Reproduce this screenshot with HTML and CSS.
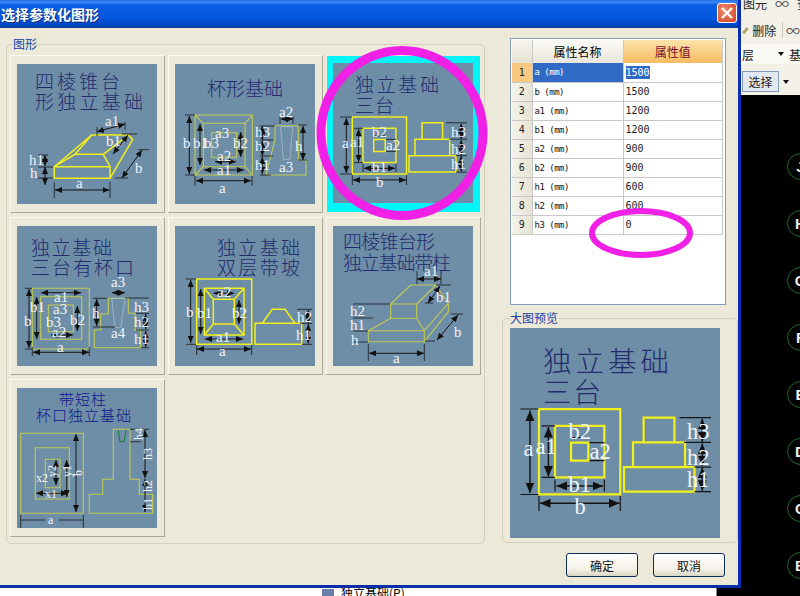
FILE: index.html
```html
<!DOCTYPE html>
<html lang="zh-CN">
<head>
    <meta charset="UTF-8">
    <title>选择参数化图形</title>
    <link rel="stylesheet" href="styles.css">
</head>
<body>
<div class="desktop">
    <svg class="svg-defs" width="0" height="0">
        <defs>
            <marker id="arr" viewBox="0 0 7 6" refX="7" refY="3" markerWidth="7" markerHeight="6" markerUnits="userSpaceOnUse" orient="auto-start-reverse">
                <path d="M0 0L7 3L0 6Z" fill="#111"/>
            </marker>
        </defs>
    </svg>

    <!-- application behind the dialog -->
    <div class="app-toolbar">
        <div class="tool-row tool-row-top"><span>图元</span><span class="tool-glass">∞</span><span>查</span></div>
        <div class="tool-row tool-row-del"><span class="pencil"></span><span>删除</span><span class="tool-sep"></span><span class="tool-glass">∞</span></div>
        <div class="tool-row tool-row-layer"><span>层</span><span class="drop"></span><span>基</span></div>
        <div class="tool-row tool-row-sel"><span class="sel-btn">选择</span><span class="drop"></span></div>
    </div>
    <div class="axis-list">
        <div class="axis">J</div>
        <div class="axis">H</div>
        <div class="axis">G</div>
        <div class="axis">F</div>
        <div class="axis">E</div>
        <div class="axis">D</div>
        <div class="axis">C</div>
        <div class="axis">B</div>
    </div>
    <div class="tree-strip"><span class="tree-icon"></span>独立基础(P)</div>

    <div class="window">
        <div class="titlebar">
            <span class="title-text">选择参数化图形</span>
            <span class="close-btn">
                <svg width="14" height="14" viewBox="0 0 14 14"><path d="M2 2L12 12M12 2L2 12" stroke="#fff" stroke-width="2.4"/></svg>
            </span>
        </div>

        <div class="dialog-main">
            <fieldset class="group group-shapes">
                <legend>图形</legend>
                <div class="shape-grid">

                    <div class="shape-card">
                        <svg class="drawing" viewBox="0 0 140 140">
                            <text class="ttl" x="18" y="25" textLength="85">四棱锥台</text>
                            <text class="ttl" x="18" y="45" textLength="108">形独立基础</text>
                            <g class="yl">
                                <path d="M37.3 102.7L74.7 71H111.3L115.7 75.3L93 114.3H37.3ZM37.3 102.7H93V114.3M93 102.7L86.3 90.3H58L37.3 102.7M58 90.3L74.7 71M86.3 90.3L111.3 71L115.7 75.3"/>
                            </g>
                            <g class="tick">
                                <path d="M37.3 118V134M93 118V134M21 91H31M21 103H36M21 114H36M80 63V72M108 58V66M105 70H120M121 85.7H132M98 114H111"/>
                            </g>
                            <g class="dim" marker-start="url(#arr)" marker-end="url(#arr)">
                                <path d="M38 126H92.5"/>
                                <path d="M28 91V102"/>
                                <path d="M28 103V121"/>
                                <path d="M80 67.7L108 60"/>
                                <path d="M111 71L96 90"/>
                                <path d="M125 86L105 114"/>
                            </g>
                            <text class="lb" x="88" y="62">a1</text>
                            <text class="lb" x="89" y="82">b1</text>
                            <text class="lb" x="12" y="101">h1</text>
                            <text class="lb" x="13" y="114">h</text>
                            <text class="lb" x="118" y="109">b</text>
                            <text class="lb" x="59" y="124">a</text>
                        </svg>
                    </div>

                    <div class="shape-card">
                        <svg class="drawing" viewBox="0 0 140 140">
                            <text class="ttl" x="32" y="32" textLength="76">杯形基础</text>
                            <g class="gn">
                                <path d="M20 51H77.3V111H20ZM28.3 59.3H70V102.7H28.3ZM36.7 68.7H61.7V93.3H36.7ZM20 51L28.3 59.3M77.3 51L70 59.3M20 111L28.3 102.7M77.3 111L70 102.7"/>
                                <path d="M100 61.7H123.3V96H131V111H91.7L91.7 108L100 76Z"/>
                            </g>
                            <path class="cup" d="M105.7 62.7H117.7L115 95.3H108.3Z"/>
                            <g class="tick">
                                <path d="M10 51H20M10 111H20M20 112V122M77 112V122M85 62H100M85 76H98M85 92H98M85 111H96M123 61H132M123 96H132M105 52V60M118 52V60"/>
                            </g>
                            <g class="dim" marker-start="url(#arr)" marker-end="url(#arr)">
                                <path d="M14.3 52V110"/>
                                <path d="M25 60V101"/>
                                <path d="M65.7 68V93"/>
                                <path d="M21 116.7H76"/>
                                <path d="M29 106H69"/>
                                <path d="M40 97.7H61"/>
                                <path d="M87.3 62V76"/>
                                <path d="M87.3 77V92"/>
                                <path d="M87.3 93V110"/>
                                <path d="M128 62V96"/>
                                <path d="M106 55H118"/>
                            </g>
                            <text class="lb" x="8" y="84">b</text>
                            <text class="lb" x="18" y="84">b1</text>
                            <text class="lb" x="29" y="84">b3</text>
                            <text class="lb" x="58" y="84">b2</text>
                            <text class="lb" x="40" y="74">a3</text>
                            <text class="lb" x="42" y="97">a2</text>
                            <text class="lb" x="42" y="111">a1</text>
                            <text class="lb" x="44" y="129">a</text>
                            <text class="lb" x="80" y="73">h3</text>
                            <text class="lb" x="80" y="87">h2</text>
                            <text class="lb" x="80" y="106">h1</text>
                            <text class="lb" x="104" y="53">a2</text>
                            <text class="lb" x="120" y="87">h</text>
                            <text class="lb" x="104" y="108">a3</text>
                        </svg>
                    </div>

                    <div class="shape-card shape-card-on">
                        <svg class="drawing" viewBox="0 0 140 140">
                            <text class="ttl" x="22" y="29" textLength="84">独立基础</text>
                            <text class="ttl" x="22" y="50" textLength="39">三台</text>
                            <g class="yl">
                                <path d="M19.3 54H73.5V110.9H19.3ZM30 65.3H62.9V99.6H30ZM40.7 76.4H52.2V88.4H40.7Z"/>
                                <path d="M89.1 76.2V59.8H109.6V76.2M82 92.7V76.2H116.7V92.7M76 92.7H123V109.1H76Z"/>
                            </g>
                            <g class="tick">
                                <path d="M7 54H19M7 111H19M19.3 112V122M73.5 112V122M21 65.3H30M21 99.6H30M30 101V109M62.9 101V109M41 73H52M53 76.4H63M53 88.4H63M113 59.8H134M116 76.2H134M123 92.7H134M123 109.1H134"/>
                            </g>
                            <g class="dim" marker-start="url(#arr)" marker-end="url(#arr)">
                                <path d="M13.3 55V110"/>
                                <path d="M25.6 66V99"/>
                                <path d="M20 116.9H73"/>
                                <path d="M31 105.3H62"/>
                                <path d="M128.2 60.5V76"/>
                                <path d="M128.2 77V92"/>
                                <path d="M128.2 93V108.5"/>
                            </g>
                            <text class="lb" x="9" y="85">a</text>
                            <text class="lb" x="17" y="84">a1</text>
                            <text class="lb" x="39" y="74">b2</text>
                            <text class="lb" x="53" y="87">a2</text>
                            <text class="lb" x="39" y="109">b1</text>
                            <text class="lb" x="43" y="124">b</text>
                            <text class="lb" x="118" y="74">h3</text>
                            <text class="lb" x="118" y="91">h2</text>
                            <text class="lb" x="118" y="106">h1</text>
                        </svg>
                    </div>

                    <div class="shape-card">
                        <svg class="drawing" viewBox="0 0 140 140">
                            <text class="ttl" x="14" y="29" textLength="81">独立基础</text>
                            <text class="ttl" x="14" y="49" textLength="103">三台有杯口</text>
                            <g class="gn">
                                <path d="M15.3 62.3H72.3V123H15.3ZM23.7 70.7H64.7V113.3H23.7ZM31.3 79H56.3V105.7H31.3Z"/>
                                <path d="M91.3 72.3H111.3V87.3H118V104H123.7V121.7H77.3V104H83.7V88H91.3Z"/>
                            </g>
                            <path class="cup" d="M94.7 72.3H108L103.7 101.7H98Z"/>
                            <g class="tick">
                                <path d="M8 62.3H15M8 123H15M15.3 121V130M72.3 121V130M76 72.3H90M76 101H98M108 72H132M119 87.3H132M119 104H132M124 121.7H132"/>
                            </g>
                            <g class="dim" marker-start="url(#arr)" marker-end="url(#arr)">
                                <path d="M12 63V122"/>
                                <path d="M19.7 71V113"/>
                                <path d="M24 66.7H64"/>
                                <path d="M16 126.3H72"/>
                                <path d="M60.3 80V105"/>
                                <path d="M34 109H56"/>
                                <path d="M95 66.7H108"/>
                                <path d="M79.7 73V100"/>
                                <path d="M128.7 88V103"/>
                                <path d="M128.7 105V121"/>
                            </g>
                            <text class="lb" x="94" y="61">a3</text>
                            <text class="lb" x="37" y="76">a1</text>
                            <text class="lb" x="13" y="86">b1</text>
                            <text class="lb" x="36" y="88">a3</text>
                            <text class="lb" x="29" y="101">b3</text>
                            <text class="lb" x="53" y="99">b2</text>
                            <text class="lb" x="35" y="111">a2</text>
                            <text class="lb" x="7" y="100">b</text>
                            <text class="lb" x="40" y="126">a</text>
                            <text class="lb" x="75" y="92">h</text>
                            <text class="lb" x="94" y="112">a4</text>
                            <text class="lb" x="117" y="86">h3</text>
                            <text class="lb" x="117" y="101">h2</text>
                            <text class="lb" x="117" y="118">h1</text>
                        </svg>
                    </div>

                    <div class="shape-card">
                        <svg class="drawing" viewBox="0 0 140 140">
                            <text class="ttl" x="42" y="29" textLength="83">独立基础</text>
                            <text class="ttl" x="42" y="49" textLength="83">双层带坡</text>
                            <g class="yl">
                                <path d="M21.7 53H76.7V118.3H21.7ZM29.3 62.3H69V109H29.3ZM38.3 73.3H59.3V98H38.3ZM29.3 62.3L38.3 73.3M69 62.3L59.3 73.3M29.3 109L38.3 98M69 109L59.3 98"/>
                                <path d="M80 97.3H126.7V118.3H80ZM87.3 97.3L97.3 83.3H110L120 97.3"/>
                            </g>
                            <g class="tick">
                                <path d="M11 53H21M11 118.3H21M21.7 119V129M76.7 119V129M122 83.3H137M125 97.3H137M127 118.3H137"/>
                            </g>
                            <g class="dim" marker-start="url(#arr)" marker-end="url(#arr)">
                                <path d="M15.7 54V117"/>
                                <path d="M25.7 63V108"/>
                                <path d="M64 74V98"/>
                                <path d="M38.5 67.3H59"/>
                                <path d="M30 113H68"/>
                                <path d="M22 123H76"/>
                                <path d="M133.3 84V97"/>
                                <path d="M133.3 98V117.5"/>
                            </g>
                            <text class="lb" x="42" y="71">a2</text>
                            <text class="lb" x="11" y="91">b</text>
                            <text class="lb" x="22" y="92">b1</text>
                            <text class="lb" x="57" y="92">b2</text>
                            <text class="lb" x="41" y="116">a1</text>
                            <text class="lb" x="44" y="130">a</text>
                            <text class="lb" x="122" y="96">h2</text>
                            <text class="lb" x="121" y="114">h1</text>
                        </svg>
                    </div>

                    <div class="shape-card">
                        <svg class="drawing" viewBox="0 0 140 140">
                            <text class="ttl" x="10" y="23" textLength="92">四棱锥台形</text>
                            <text class="ttl" x="10" y="44" textLength="108">独立基础带柱</text>
                            <g class="gn">
                                <path d="M35.3 104.7H91.3V115.7H35.3ZM35.3 104.7L57.7 92.3M91.3 104.7L83.7 92.3M57.7 78H83.7V92.3H57.7ZM57.7 78L77.7 59H103L83.7 78M103 59L115.3 77.3V85.7L91.3 115.7M91.3 104.7L115.3 77.3"/>
                            </g>
                            <g class="tick">
                                <path d="M35.3 118V135M91.3 118V135M20 78H57M20 92H40M20 105H35M20 116H35M103 59H118M92 77H100M84 45V58M108 45V58M118 88H130M92 115H102"/>
                            </g>
                            <g class="dim" marker-start="url(#arr)" marker-end="url(#arr)">
                                <path d="M36 127.3H91"/>
                                <path d="M84 53H108"/>
                                <path d="M107 60L95 77"/>
                                <path d="M125 89L104 114"/>
                            </g>
                            <text class="lb" x="91" y="50">a1</text>
                            <text class="lb" x="103" y="76">b1</text>
                            <text class="lb" x="17" y="90">h2</text>
                            <text class="lb" x="17" y="104">h1</text>
                            <text class="lb" x="18" y="119">h</text>
                            <text class="lb" x="121" y="111">b</text>
                            <text class="lb" x="60" y="137">a</text>
                        </svg>
                    </div>

                    <div class="shape-card">
                        <svg class="drawing" viewBox="0 0 140 140">
                            <text class="ttl ttl-sm" x="42" y="17" textLength="47">带短柱</text>
                            <text class="ttl ttl-sm" x="19" y="33" textLength="95">杯口独立基础</text>
                            <g class="gn">
                                <path d="M3.7 45.3H66.3V125.3H3.7ZM18.3 59.7H52.3V111H18.3ZM28.3 71.3H43V99.7H28.3ZM18.3 105.3H52.3"/>
                                <path d="M96.3 41.3H113V91.3H122.3V106.3H135.7V125.3H72.3V106.3H85.7V91.3H96.3Z"/>
                            </g>
                            <path class="cup-green" d="M101.3 42L103 53.7H107L109 42"/>
                            <g class="tick">
                                <path d="M3.7 127V140M66.3 127V140M113 41.3H132M113 53.7H124M4 132H28M42 132H66"/>
                            </g>
                            <g class="dim" marker-start="url(#arr)" marker-end="url(#arr)">
                                <path d="M59 46V124"/>
                                <path d="M49.7 72V109"/>
                                <path d="M39 72V97"/>
                                <path d="M19 105.3H51"/>
                                <path d="M128 42V90"/>
                                <path d="M128 91V124"/>
                            </g>
                            <text class="lb lb-sm" x="19" y="94">x2</text>
                            <text class="lb lb-sm" x="28" y="110">x1</text>
                            <text class="lb lb-sm" x="31" y="136">a</text>
                            <text class="lb lb-sm" transform="translate(39 89) rotate(-90)">y2</text>
                            <text class="lb lb-sm" transform="translate(54 89) rotate(-90)">y1</text>
                            <text class="lb lb-sm" transform="translate(65 88) rotate(-90)">b</text>
                            <text class="lb lb-sm" transform="translate(126 52) rotate(-90)">h4</text>
                            <text class="lb lb-sm" transform="translate(135 72) rotate(-90)">h3</text>
                            <text class="lb lb-sm" transform="translate(135 104) rotate(-90)">h2</text>
                            <text class="lb lb-sm" transform="translate(135 122) rotate(-90)">h1</text>
                        </svg>
                    </div>

                </div>
            </fieldset>

            <div class="side">
                <div class="table-wrap">
                    <table class="prop-table">
                        <thead>
                            <tr>
                                <th class="col-no"></th>
                                <th class="col-name">属性名称</th>
                                <th class="col-value">属性值</th>
                            </tr>
                        </thead>
                        <tbody>
                            <tr class="row-on"><td class="no">1</td><td class="name">a (mm)</td><td class="val"><span class="val-sel">1500</span></td></tr>
                            <tr><td class="no">2</td><td class="name">b (mm)</td><td class="val">1500</td></tr>
                            <tr><td class="no">3</td><td class="name">a1 (mm)</td><td class="val">1200</td></tr>
                            <tr><td class="no">4</td><td class="name">b1 (mm)</td><td class="val">1200</td></tr>
                            <tr><td class="no">5</td><td class="name">a2 (mm)</td><td class="val">900</td></tr>
                            <tr><td class="no">6</td><td class="name">b2 (mm)</td><td class="val">900</td></tr>
                            <tr><td class="no">7</td><td class="name">h1 (mm)</td><td class="val">600</td></tr>
                            <tr><td class="no">8</td><td class="name">h2 (mm)</td><td class="val">600</td></tr>
                            <tr><td class="no">9</td><td class="name">h3 (mm)</td><td class="val">0</td></tr>
                        </tbody>
                    </table>
                </div>

                <fieldset class="group group-preview">
                    <legend>大图预览</legend>
                    <svg class="drawing drawing-big" viewBox="0 0 140 140">
                        <text class="ttl" x="22" y="29" textLength="84">独立基础</text>
                        <text class="ttl" x="22" y="50" textLength="39">三台</text>
                        <g class="yl">
                            <path d="M19.3 54H73.5V110.9H19.3ZM30 65.3H62.9V99.6H30ZM40.7 76.4H52.2V88.4H40.7Z"/>
                            <path d="M89.1 76.2V59.8H109.6V76.2M82 92.7V76.2H116.7V92.7M76 92.7H123V109.1H76Z"/>
                        </g>
                        <g class="tick">
                            <path d="M7 54H19M7 111H19M19.3 112V122M73.5 112V122M21 65.3H30M21 99.6H30M30 101V109M62.9 101V109M41 73H52M53 76.4H63M53 88.4H63M113 59.8H134M116 76.2H134M123 92.7H134M123 109.1H134"/>
                        </g>
                        <g class="dim" marker-start="url(#arr)" marker-end="url(#arr)">
                            <path d="M13.3 55V110"/>
                            <path d="M25.6 66V99"/>
                            <path d="M20 116.9H73"/>
                            <path d="M31 105.3H62"/>
                            <path d="M128.2 60.5V76"/>
                            <path d="M128.2 77V92"/>
                            <path d="M128.2 93V108.5"/>
                        </g>
                        <text class="lb" x="9" y="85">a</text>
                        <text class="lb" x="17" y="84">a1</text>
                        <text class="lb" x="39" y="74">b2</text>
                        <text class="lb" x="53" y="87">a2</text>
                        <text class="lb" x="39" y="109">b1</text>
                        <text class="lb" x="43" y="124">b</text>
                        <text class="lb" x="118" y="74">h3</text>
                        <text class="lb" x="118" y="91">h2</text>
                        <text class="lb" x="118" y="106">h1</text>
                    </svg>
                </fieldset>
            </div>
        </div>

        <div class="dialog-buttons">
            <button class="btn">确定</button>
            <button class="btn">取消</button>
        </div>
    </div>

    <!-- hand drawn marks on top of the screenshot -->
    <svg class="marks" width="800" height="596">
        <ellipse cx="402" cy="133" rx="81" ry="82.5"/>
        <ellipse class="mark-thin" cx="641" cy="233" rx="49" ry="22"/>
    </svg>
</div>
</body>
</html>
```

FILE: styles.css
```css
* {
    box-sizing: border-box;
}
html, body {
    margin: 0;
    padding: 0;
}
body {
    font-family: "Noto Sans CJK SC", "Liberation Sans", sans-serif;
    font-size: 12px;
    color: #000;
}
.desktop {
    position: relative;
    width: 800px;
    height: 596px;
    overflow: hidden;
    background: #000;
}
.svg-defs {
    position: absolute;
}

/* app behind */
.app-toolbar {
    position: absolute;
    left: 741px;
    top: 0;
    width: 59px;
    height: 95px;
    background: #f3f1e7;
    overflow: hidden;
    font-size: 12px;
    color: #222;
}
.tool-row {
    display: flex;
    align-items: center;
    white-space: nowrap;
}
.tool-row-top {
    height: 12px;
    margin-top: -3px;
    gap: 8px;
    padding-left: 2px;
}
.tool-row-del {
    height: 20px;
    margin-top: 11px;
    gap: 3px;
}
.tool-row-layer {
    height: 20px;
    margin-top: 4px;
    padding-left: 1px;
    background: #fbfaf4;
}
.tool-row-layer .drop {
    margin-left: 24px;
    margin-right: 5px;
}
.tool-row-sel {
    height: 21px;
    margin-top: 7px;
    gap: 4px;
    padding-left: 1px;
}
.tool-glass {
    font-size: 14px;
    color: #555;
}
.pencil {
    width: 9px;
    height: 3px;
    margin-left: 1px;
    background: #b3a36a;
    transform: rotate(-50deg);
}
.tool-sep {
    width: 1px;
    height: 16px;
    background: #c9c7ba;
    margin-left: 3px;
}
.drop {
    width: 0;
    height: 0;
    border-left: 3px solid transparent;
    border-right: 3px solid transparent;
    border-top: 4px solid #111;
}
.sel-btn {
    width: 37px;
    height: 21px;
    line-height: 19px;
    text-align: center;
    border: 1px solid #7f9db9;
    background: #e4e8f1;
}
.axis-list {
    position: absolute;
    left: 787px;
    top: 153px;
    display: flex;
    flex-direction: column;
    gap: 30px;
}
.axis {
    width: 27px;
    height: 27px;
    line-height: 25px;
    text-align: center;
    border: 1px solid #1f6a2a;
    border-radius: 50%;
    color: #eee;
    font-family: "Liberation Sans", sans-serif;
    font-size: 15px;
    font-weight: bold;
}
.tree-strip {
    position: absolute;
    left: 0;
    top: 586px;
    width: 717px;
    height: 10px;
    padding-left: 322px;
    display: flex;
    gap: 7px;
    background: #fff;
    border-right: 1px solid #888;
    font-size: 12px;
    line-height: 14px;
}
.tree-icon {
    width: 12px;
    height: 8px;
    margin-top: 3px;
    background: #6a7fa8;
}

/* dialog */
.window {
    position: absolute;
    left: 0;
    top: 0;
    width: 741px;
    height: 588px;
    display: flex;
    flex-direction: column;
    background: #ece9d8;
    border-right: 3px solid #0a2fb4;
    border-bottom: 3px solid #0a2fa8;
}
.titlebar {
    height: 28px;
    flex-shrink: 0;
    display: flex;
    align-items: center;
    justify-content: space-between;
    padding: 0 1px;
    background: linear-gradient(#1f6bea 0, #3f8cf3 2px, #0a5fe4 5px, #0657de 18px, #0348c4 25px, #02389e 28px);
}
.title-text {
    color: #fff;
    font-size: 14px;
    font-weight: bold;
    text-shadow: 1px 1px 0 #0b2f80;
}
.close-btn {
    width: 20px;
    height: 20px;
    display: flex;
    align-items: center;
    justify-content: center;
    border: 1px solid #fff;
    border-radius: 3px;
    background: radial-gradient(circle at 35% 35%, #ee8a6c, #d4421f);
    margin-bottom: 2px;
}
.dialog-main {
    display: flex;
    align-items: flex-start;
    height: 516px;
    flex-shrink: 0;
}
.group {
    margin: 0;
    border: 1px solid #d3d0bf;
    border-radius: 5px;
}
.group legend {
    color: #1a3fa5;
    font-size: 12px;
    line-height: 14px;
    padding: 0;
}
.group-shapes {
    width: 479px;
    height: 507px;
    margin: 9px 0 0 6px;
    padding: 4px 3px 0;
}
.group-shapes legend {
    margin-left: 3px;
}
.shape-grid {
    display: grid;
    grid-template-columns: repeat(3, 155px);
    grid-auto-rows: 158px;
    column-gap: 3px;
    row-gap: 4px;
}
.shape-card {
    padding: 8px 6px;
    border: 1px solid;
    border-color: #fbfaf4 #a9a797 #a9a797 #fbfaf4;
}
.shape-card-on {
    background: #00f6f6;
    border-color: #ece9d8;
    padding: 7px 6px;
}
.drawing {
    display: block;
    width: 140px;
    height: 140px;
    background: #6e8da6;
}
.drawing-big {
    width: 210px;
    height: 210px;
}

/* svg drawing parts */
.ttl {
    font-family: "Noto Sans CJK SC", sans-serif;
    font-size: 19px;
    font-weight: 300;
    fill: #232c6e;
}
.ttl-sm {
    font-size: 15px;
    fill: #10188a;
}
.lb {
    font-family: "Liberation Serif", serif;
    font-size: 15px;
    fill: #f2f4fb;
}
.lb-sm {
    font-size: 12px;
}
.yl path {
    fill: none;
    stroke: #f2f01a;
    stroke-width: 1.5;
}
.gn path {
    fill: none;
    stroke: #c0cc50;
    stroke-width: 1.1;
}
.cup {
    fill: none;
    stroke: #a9bcc8;
    stroke-width: 0.8;
}
.cup-green {
    fill: none;
    stroke: #1d7f3b;
    stroke-width: 1;
}
.tick path {
    fill: none;
    stroke: #161616;
    stroke-width: 0.8;
}
.dim path {
    fill: none;
    stroke: #161616;
    stroke-width: 1;
}

/* right side */
.side {
    width: 236px;
    margin: 10px 0 0 17px;
}
.table-wrap {
    width: 216px;
    height: 267px;
    margin-left: 8px;
    padding: 1px;
    background: #fff;
    border: 1px solid #7f9db9;
}
.prop-table {
    width: 211px;
    table-layout: fixed;
    border-collapse: collapse;
}
.prop-table th {
    height: 23px;
    padding: 0;
    font-size: 12px;
    font-weight: normal;
    border-right: 1px solid #c8c8c8;
}
.col-no {
    width: 20px;
    background: linear-gradient(#f6f5ee, #e6e3d4);
}
.col-name {
    width: 91px;
    background: linear-gradient(#fbfaf6, #e8e6da);
}
.col-value {
    background: linear-gradient(#fbe3ab, #f5bb62);
    color: #7a0a2c;
}
.prop-table td {
    height: 19px;
    padding: 0 0 0 2px;
    border-right: 1px solid #c8c8c8;
    border-bottom: 1px solid #c8c8c8;
    font-family: "DejaVu Sans Mono", monospace;
    font-size: 10px;
    color: #222;
    white-space: nowrap;
}
.prop-table td.no {
    padding: 0;
    text-align: center;
    font-size: 10px;
    background: linear-gradient(90deg, #f4f3ea, #e6e3d4);
}
.prop-table td.name {
    font-size: 9px;
    letter-spacing: -0.5px;
    color: #111;
}
.row-on td.no {
    background: #f8c97e;
}
.row-on td.name {
    background: #316ac5;
    color: #fff;
}
.val-sel {
    display: inline-block;
    line-height: 13px;
    background: #316ac5;
    color: #fff;
}
.group-preview {
    width: 236px;
    height: 232px;
    margin-top: 6px;
    padding: 3px 0 0 7px;
}
.dialog-buttons {
    display: flex;
    justify-content: flex-end;
    gap: 15px;
    padding: 9px 13px 0 0;
}
.btn {
    width: 72px;
    height: 24px;
    padding: 0;
    font-family: "Noto Sans CJK SC", sans-serif;
    font-size: 12px;
    color: #111;
    border: 1px solid #0a2f5c;
    border-radius: 3px;
    background: linear-gradient(#ffffff, #f3f1e6 70%, #d9d5c3);
}

/* pink circles */
.marks {
    position: absolute;
    left: 0;
    top: 0;
    pointer-events: none;
}
.marks ellipse {
    fill: none;
    stroke: #f020e6;
    stroke-width: 9;
}
.marks .mark-thin {
    stroke-width: 6;
}
```
